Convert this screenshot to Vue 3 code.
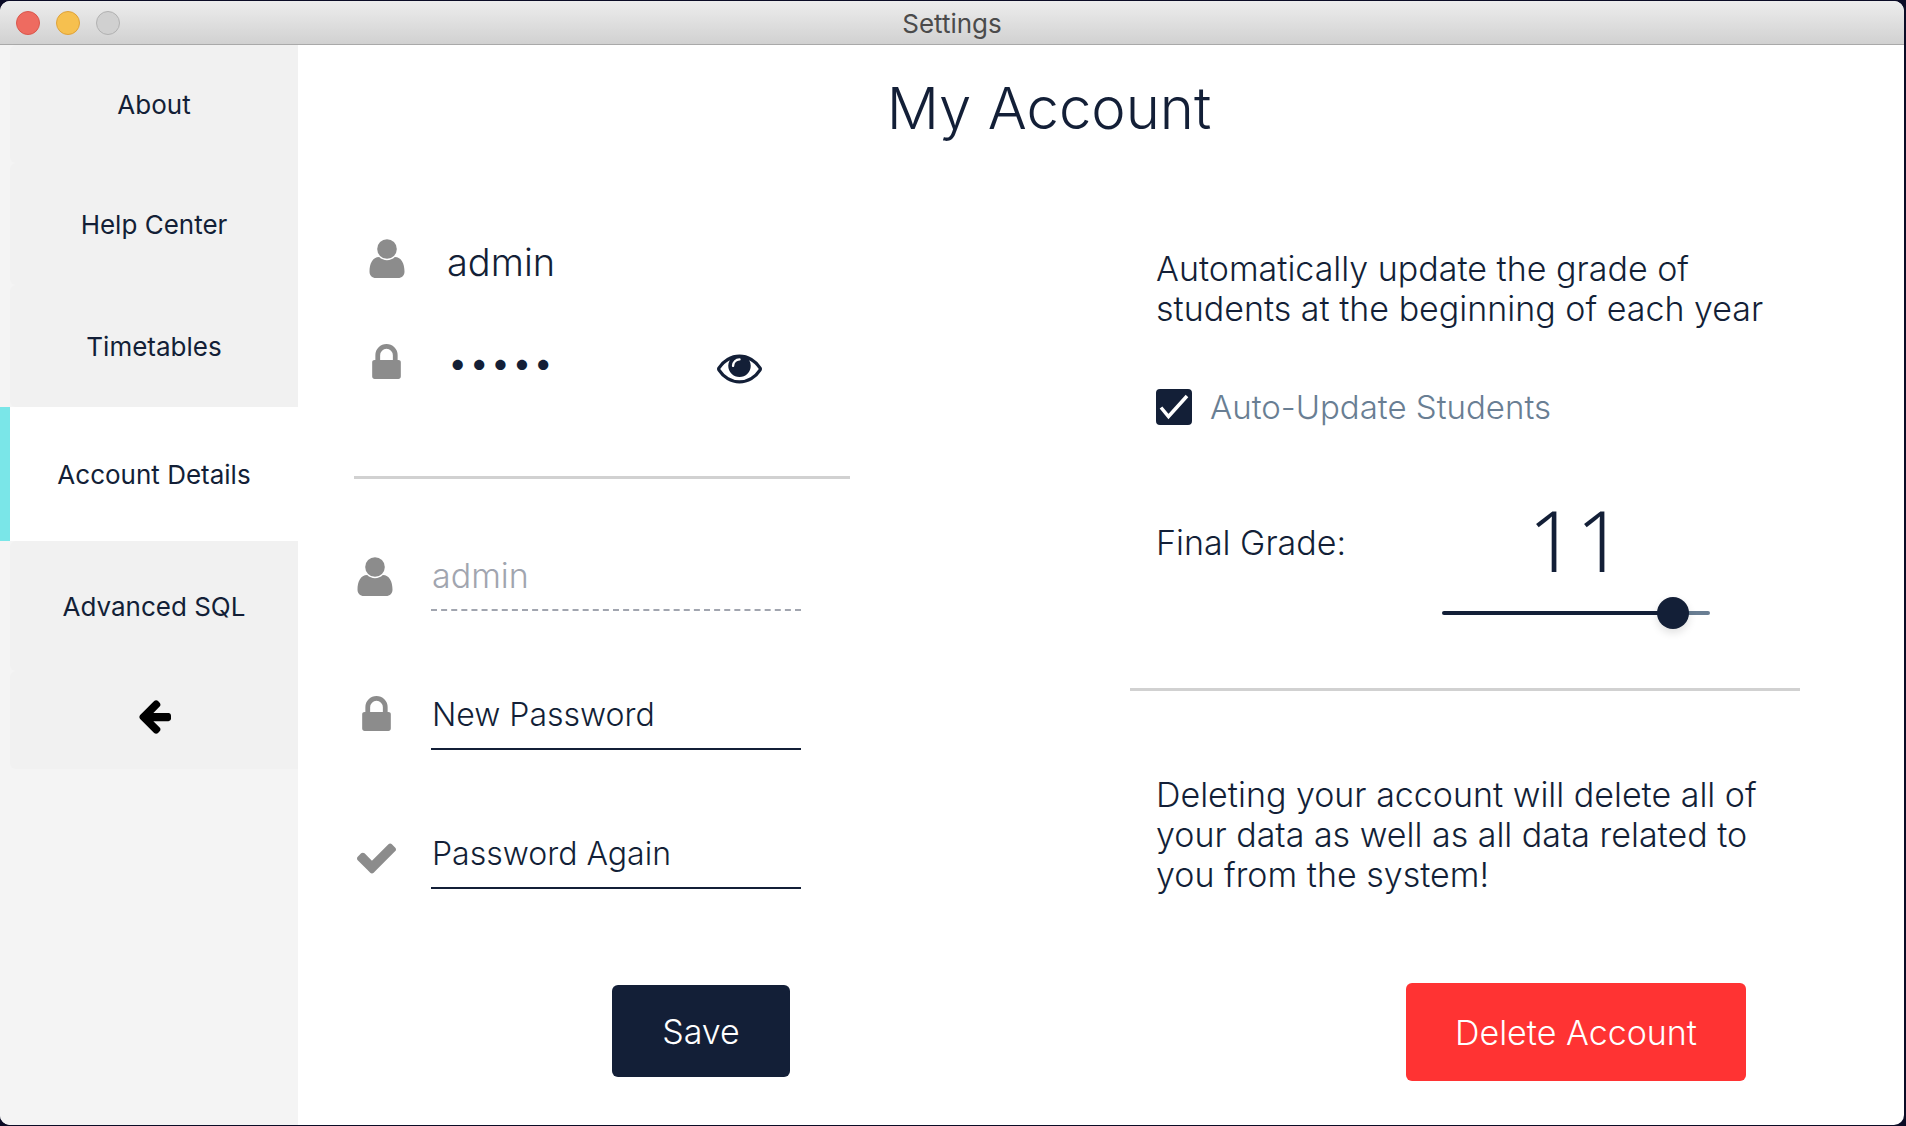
<script setup>
import { computed, ref } from 'vue'

const navItems = [
  { label: 'About', size: 'short' },
  { label: 'Help Center', size: '' },
  { label: 'Timetables', size: '' },
  { label: 'Account Details', size: 'active' },
  { label: 'Advanced SQL', size: 'tall' },
]

const username = ref('admin')
const currentPassword = ref('admin')
const showPassword = ref(false)
const newPassword = ref('')
const passwordAgain = ref('')
const autoUpdate = ref(true)

const minGrade = 1
const maxGrade = 12
const finalGrade = ref(11)
const fill = computed(() => `${((finalGrade.value - minGrade) / (maxGrade - minGrade)) * 100}%`)
</script>

<template>
  <div class="window">
    <header class="titlebar">
      <div class="lights">
        <button type="button" class="light close" aria-label="Close"></button>
        <button type="button" class="light minimise" aria-label="Minimise"></button>
        <button type="button" class="light zoom" aria-label="Zoom" disabled></button>
      </div>
      <span class="window-title">Settings</span>
    </header>

    <div class="body">
      <nav class="sidebar">
        <a v-for="item in navItems" :key="item.label" href="#" class="nav-item" :class="item.size">{{ item.label }}</a>
        <a href="#" class="nav-item back" aria-label="Back">
          <svg width="33" height="34" viewBox="128 178 1536 1563" aria-hidden="true">
            <path d="M1664 896v128q0 53-32.5 90.5t-84.5 37.5h-704l293 294q38 36 38 90t-38 90l-75 76q-37 37-90 37-52 0-91-37l-651-652q-37-37-37-90 0-52 37-91l651-650q38-38 91-38 52 0 90 38l75 74q38 38 38 91t-38 91l-293 293h704q52 0 84.5 37.5t32.5 90.5z" />
          </svg>
        </a>
      </nav>

      <main class="content">
        <h1>My Account</h1>

        <div class="columns">
          <form class="credentials" @submit.prevent>
            <div class="current">
              <svg class="icon" viewBox="0 0 40 40" aria-hidden="true">
                <circle cx="18" cy="10" r="9.8" />
                <path d="M10.2 18C3.5 18 .5 25 .5 32.500C.5 36.600 3 39 7 39H29C33 39 35.500 36.600 35.500 32.500C35.500 25 32.500 18 25.800 18A11.200 11.200 0 0 1 10.200 18Z" />
              </svg>
              <span class="current-name">{{ username }}</span>
            </div>

            <div class="current">
              <svg class="icon" viewBox="0 0 40 40" aria-hidden="true">
                <svg x="3" y="0" width="29" height="35" viewBox="320 128 1152 1408">
                  <path d="M640 768h512v-192q0-106-75-181t-181-75-181 75-75 181v192zm832 96v576q0 40-28 68t-68 28h-960q-40 0-68-28t-28-68v-576q0-40 28-68t68-28h32v-192q0-184 132-316t316-132 316 132 132 316v192h32q40 0 68 28t28 68z" />
                </svg>
              </svg>
              <input
                v-model="currentPassword"
                class="current-password"
                :type="showPassword ? 'text' : 'password'"
                aria-label="Current password"
                readonly
              />
              <button type="button" class="reveal" aria-label="Show password" @click="showPassword = !showPassword">
                <svg width="45" height="30" viewBox="0 384 1792 1152" aria-hidden="true">
                  <path d="M1664 960q-152-236-381-353 61 104 61 225 0 185-131.500 316.500t-316.500 131.500-316.500-131.500-131.500-316.500q0-121 61-225-229 117-381 353 133 205 333.500 326.500t434.500 121.500 434.500-121.500 333.500-326.500zm-720-384q0-20-14-34t-34-14q-125 0-214.500 89.500t-89.500 214.500q0 20 14 34t34 14 34-14 14-34q0-86 61-147t147-61q20 0 34-14t14-34zm848 384q0 34-20 69-140 230-376.500 368.500t-499.500 138.500-499.500-139-376.500-368q-20-35-20-69t20-69q140-229 376.500-368t499.500-139 499.500 139 376.500 368q20 35 20 69z" />
                </svg>
              </button>
            </div>

            <hr />

            <div class="fields">
              <label class="field">
                <svg class="icon" viewBox="0 0 40 40" aria-hidden="true">
                  <circle cx="18" cy="10" r="9.8" />
                  <path d="M10.2 18C3.5 18 .5 25 .5 32.500C.5 36.600 3 39 7 39H29C33 39 35.500 36.600 35.500 32.500C35.500 25 32.500 18 25.800 18A11.200 11.200 0 0 1 10.200 18Z" />
                </svg>
                <input v-model="username" type="text" aria-label="Username" disabled />
              </label>
              <label class="field">
                <svg class="icon" viewBox="0 0 40 40" aria-hidden="true">
                  <svg x="5" y="0" width="29" height="35" viewBox="320 128 1152 1408">
                    <path d="M640 768h512v-192q0-106-75-181t-181-75-181 75-75 181v192zm832 96v576q0 40-28 68t-68 28h-960q-40 0-68-28t-28-68v-576q0-40 28-68t68-28h32v-192q0-184 132-316t316-132 316 132 132 316v192h32q40 0 68 28t28 68z" />
                  </svg>
                </svg>
                <input v-model="newPassword" type="password" placeholder="New Password" aria-label="New Password" />
              </label>
              <label class="field">
                <svg class="icon" viewBox="0 0 40 40" aria-hidden="true">
                  <svg x="0" y="8" width="39" height="31" viewBox="121 334 1550 1188">
                    <path d="M1671 566q0 40-28 68l-724 724-136 136q-28 28-68 28t-68-28l-136-136-362-362q-28-28-28-68t28-68l136-136q28-28 68-28t68 28l294 295 656-657q28-28 68-28t68 28l136 136q28 28 28 68z" />
                  </svg>
                </svg>
                <input v-model="passwordAgain" type="password" placeholder="Password Again" aria-label="Password Again" />
              </label>
            </div>

            <button type="submit" class="button save">Save</button>
          </form>

          <section class="options">
            <p class="auto-text">Automatically update the grade of students at the beginning of each year</p>

            <label class="check">
              <span class="check-box">
                <input v-model="autoUpdate" type="checkbox" />
                <svg v-if="autoUpdate" viewBox="0 0 36 36" aria-hidden="true">
                  <path d="M5 18.500L12.500 27.500L31 7" />
                </svg>
              </span>
              Auto-Update Students
            </label>

            <div class="grade">
              <label class="grade-label" for="final-grade">Final Grade:</label>
              <div class="grade-control">
                <output for="final-grade">{{ finalGrade }}</output>
                <input
                  id="final-grade"
                  v-model.number="finalGrade"
                  type="range"
                  :min="minGrade"
                  :max="maxGrade"
                  :style="{ '--fill': fill }"
                />
              </div>
            </div>

            <hr />

            <p class="delete-text">
              Deleting your account will delete all of your data as well as all data related to you from the system!
            </p>
            <button type="button" class="button delete">Delete Account</button>
          </section>
        </div>
      </main>
    </div>
  </div>
</template>

<style>
body {
  background: #0b0c26;
}
</style>

<style scoped>
.window,
.window * {
  box-sizing: border-box;
}

.window {
  --navy: #131f37;
  --slate: #697e93;
  --grey: #8c8c8c;
  display: flex;
  flex-direction: column;
  min-height: calc(100vh - 2px);
  margin: 1px 2px 1px 0;
  border-radius: 10px;
  overflow: hidden;
  background: #fff;
  color: var(--navy);
  font-family: Inter, "Open Sans", sans-serif;
  font-weight: 350;
}

input,
button {
  font: inherit;
  color: inherit;
  border: 0;
  margin: 0;
  padding: 0;
  background: none;
  border-radius: 0;
  outline: 0;
}

hr {
  height: 3px;
  margin: 0;
  border: 0;
  background: #d1d1d1;
}

/* Title bar */
.titlebar {
  display: grid;
  grid-template-columns: 1fr auto 1fr;
  align-items: center;
  height: 44px;
  padding: 0 16px;
  border-bottom: 1px solid #a9a9a9;
  background: linear-gradient(#ededed, #d1d1d1);
}

.lights {
  display: flex;
  gap: 16px;
}

.light {
  width: 24px;
  height: 24px;
  border: 1px solid;
  border-radius: 50%;
}

.close {
  background: #ee6b60;
  border-color: #d9574c;
}

.minimise {
  background: #f6c04f;
  border-color: #dea23a;
}

.zoom {
  background: #d0d0d0;
  border-color: #b1b1b1;
}

.window-title {
  padding-top: 2px;
  color: #4b4b4b;
  font-size: 26px;
  font-weight: 400;
  line-height: 32px;
}

/* Sidebar */
.body {
  display: flex;
  flex: 1;
}

.sidebar {
  flex: none;
  width: 298px;
  background: #f4f4f4;
}

.nav-item {
  display: flex;
  align-items: center;
  justify-content: center;
  height: 122px;
  margin-left: 10px;
  border-radius: 6px 0 0 6px;
  background: #f1f1f1;
  color: var(--navy);
  font-size: 26px;
  font-weight: 400;
  text-decoration: none;
}

.nav-item.short {
  height: 118px;
}

.nav-item.tall {
  height: 130px;
}

.nav-item.active {
  height: 134px;
  margin-left: 0;
  border-left: 10px solid #7ae6e8;
  border-radius: 0;
  background: #fff;
}

.nav-item.back {
  height: 98px;
  padding-bottom: 6px;
}

.back svg {
  fill: #000;
}

/* Content */
.content {
  flex: 1;
  min-width: 0;
  padding: 27px 104px 44px 0;
}

h1 {
  margin: 0;
  font-size: 58px;
  font-weight: 350;
  line-height: 72px;
  text-align: center;
}

.columns {
  display: grid;
  grid-template-columns: minmax(0, 496px) minmax(0, 670px);
  justify-content: space-between;
  align-items: start;
  padding-left: 56px;
}

.icon {
  flex: none;
  width: 40px;
  height: 40px;
  fill: var(--grey);
}

.credentials {
  display: flex;
  flex-direction: column;
  padding-top: 95px;
}

.current {
  display: flex;
  align-items: flex-start;
  gap: 38px;
  padding-left: 15px;
}

.current + .current {
  margin-top: 59px;
}

.current-name {
  font-size: 38px;
  line-height: 46px;
}

.current-password {
  width: 232px;
  height: 36px;
  font-size: 38px;
  line-height: 36px;
}

.reveal {
  display: flex;
  padding: 10px 0;
}

.reveal svg {
  fill: var(--navy);
}

.credentials hr {
  margin-top: 82px;
}

.fields {
  display: flex;
  flex-direction: column;
  gap: 79px;
  margin-top: 72px;
  padding-left: 3px;
}

.field {
  display: flex;
  align-items: flex-start;
  gap: 34px;
}

.field .icon {
  margin-top: 6px;
}

.field input {
  width: 370px;
  height: 60px;
  padding: 0 0 10px 1px;
  border-bottom: 2px solid var(--navy);
  font-size: 32px;
}

.field input::placeholder {
  color: var(--navy);
  opacity: 1;
}

.field input:disabled {
  border-bottom: 2px dashed #a1a5af;
  color: #a1a5af;
  font-size: 34px;
}

.button {
  align-self: flex-end;
  border-radius: 6px;
  color: #fff;
  font-size: 34px;
  cursor: pointer;
}

.save {
  width: 178px;
  height: 92px;
  margin: 96px 60px 0 0;
  background: var(--navy);
}

.options {
  display: flex;
  flex-direction: column;
  padding-top: 105px;
}

.options p {
  max-width: 650px;
  margin: 0;
  padding-left: 26px;
  font-size: 34px;
  line-height: 40px;
}

.check {
  display: flex;
  align-items: center;
  gap: 18px;
  height: 36px;
  margin-top: 60px;
  padding-left: 26px;
  color: var(--slate);
  font-size: 33px;
}

.check-box {
  position: relative;
  width: 36px;
  height: 36px;
}

.check-box input {
  display: block;
  width: 36px;
  height: 36px;
  border: 2px solid var(--navy);
  border-radius: 4px;
  appearance: none;
}

.check-box input:checked {
  background: var(--navy);
}

.check-box svg {
  position: absolute;
  inset: 0;
  fill: none;
  stroke: #fff;
  stroke-width: 3.5;
  pointer-events: none;
}

.grade {
  display: flex;
  justify-content: space-between;
  margin-top: 75px;
  padding: 0 90px 0 26px;
}

.grade-label {
  font-size: 34px;
  line-height: 86px;
}

.grade-control {
  display: flex;
  flex-direction: column;
  gap: 17px;
  width: 268px;
}

output {
  font-family: "Noto Sans", "Open Sans", sans-serif;
  font-size: 84px;
  font-weight: 300;
  line-height: 80px;
  text-align: center;
}

input[type="range"] {
  width: 100%;
  height: 32px;
  appearance: none;
}

input[type="range"]::-webkit-slider-runnable-track {
  height: 4px;
  border-radius: 2px;
  background: linear-gradient(to right, var(--navy) var(--fill), var(--slate) var(--fill));
}

input[type="range"]::-webkit-slider-thumb {
  width: 32px;
  height: 32px;
  margin-top: -14px;
  border-radius: 50%;
  background: var(--navy);
  box-shadow: 0 4px 8px rgba(0, 0, 0, 0.12);
  appearance: none;
}

.options hr {
  margin-top: 59px;
}

.options .delete-text {
  margin-top: 84px;
}

.delete {
  width: 340px;
  height: 98px;
  margin: 88px 54px 0 0;
  background: #ff3333;
}
</style>
